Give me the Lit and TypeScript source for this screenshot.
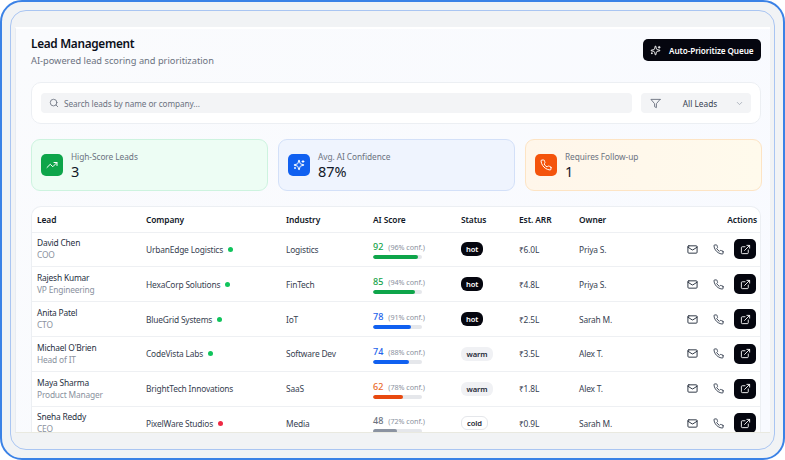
import { LitElement, html, css, svg } from 'lit';
import { customElement } from 'lit/decorators.js';

type Lead = {
  name: string; role: string; company: string; dot: string; industry: string;
  score: number; conf: number; tone: string; status: string; arr: string; owner: string;
};

const leads: Lead[] = [
  { name: 'David Chen', role: 'COO', company: 'UrbanEdge Logistics', dot: 'green', industry: 'Logistics', score: 92, conf: 96, tone: 'green', status: 'hot', arr: '₹6.0L', owner: 'Priya S.' },
  { name: 'Rajesh Kumar', role: 'VP Engineering', company: 'HexaCorp Solutions', dot: 'green', industry: 'FinTech', score: 85, conf: 94, tone: 'green', status: 'hot', arr: '₹4.8L', owner: 'Priya S.' },
  { name: 'Anita Patel', role: 'CTO', company: 'BlueGrid Systems', dot: 'green', industry: 'IoT', score: 78, conf: 91, tone: 'blue', status: 'hot', arr: '₹2.5L', owner: 'Sarah M.' },
  { name: "Michael O'Brien", role: 'Head of IT', company: 'CodeVista Labs', dot: 'green', industry: 'Software Dev', score: 74, conf: 88, tone: 'blue', status: 'warm', arr: '₹3.5L', owner: 'Alex T.' },
  { name: 'Maya Sharma', role: 'Product Manager', company: 'BrightTech Innovations', dot: '', industry: 'SaaS', score: 62, conf: 78, tone: 'orange', status: 'warm', arr: '₹1.8L', owner: 'Alex T.' },
  { name: 'Sneha Reddy', role: 'CEO', company: 'PixelWare Studios', dot: 'red', industry: 'Media', score: 48, conf: 72, tone: 'gray', status: 'cold', arr: '₹0.9L', owner: 'Sarah M.' },
];

const icon = (body: unknown, size = 12) => html`<svg width=${size} height=${size} viewBox="0 0 24 24" fill="none" stroke="currentColor" stroke-width="2" stroke-linecap="round" stroke-linejoin="round">${body}</svg>`;

const phone = svg`<path d="M22 16.92v3a2 2 0 0 1-2.18 2 19.79 19.79 0 0 1-8.63-3.07 19.5 19.5 0 0 1-6-6 19.79 19.79 0 0 1-3.07-8.67A2 2 0 0 1 4.11 2h3a2 2 0 0 1 2 1.72 12.84 12.84 0 0 0 .7 2.81 2 2 0 0 1-.45 2.11L8.09 9.91a16 16 0 0 0 6 6l1.27-1.27a2 2 0 0 1 2.11-.45 12.84 12.84 0 0 0 2.81.7A2 2 0 0 1 22 16.92z"/>`;
const sparkles = svg`<path d="M9.937 15.5A2 2 0 0 0 8.5 14.063l-6.135-1.582a.5.5 0 0 1 0-.962L8.5 9.936A2 2 0 0 0 9.937 8.5l1.582-6.135a.5.5 0 0 1 .963 0L14.063 8.5A2 2 0 0 0 15.5 9.937l6.135 1.581a.5.5 0 0 1 0 .964L15.5 14.063a2 2 0 0 0-1.437 1.437l-1.582 6.135a.5.5 0 0 1-.963 0z"/><path d="M20 3v4"/><path d="M22 5h-4"/><path d="M4 17v2"/><path d="M5 18H3"/>`;
const trending = svg`<polyline points="22 7 13.5 15.5 8.5 10.5 2 17"/><polyline points="16 7 22 7 22 13"/>`;
const mail = svg`<rect x="2" y="4" width="20" height="16" rx="2"/><path d="m22 7-8.97 5.7a1.94 1.94 0 0 1-2.06 0L2 7"/>`;
const external = svg`<path d="M18 13v6a2 2 0 0 1-2 2H5a2 2 0 0 1-2-2V8a2 2 0 0 1 2-2h6"/><polyline points="15 3 21 3 21 9"/><line x1="10" y1="14" x2="21" y2="3"/>`;
const search = svg`<circle cx="11" cy="11" r="8"/><line x1="21" y1="21" x2="16.65" y2="16.65"/>`;
const filter = svg`<polygon points="22 3 2 3 10 12.46 10 19 14 21 14 12.46 22 3"/>`;
const chevron = svg`<path d="m6 9 6 6 6-6"/>`;

@customElement('app-root')
export class AppRoot extends LitElement {
  static styles = css`
    :host {
      display: block;
      width: 785px;
      height: 460px;
      font-family: "Noto Sans", "Liberation Sans", sans-serif;
      color: #111827;
    }
    svg { flex: none; display: block; }
    .frame {
      box-sizing: border-box;
      height: 460px;
      padding: 8px;
      border: 2px solid #3b82e6;
      border-radius: 22px;
      background: #f1f3f5;
    }
    .window {
      box-sizing: border-box;
      height: 440px;
      padding-top: 16px;
      border: 1px solid #a9c5f2;
      border-radius: 16px;
      overflow: hidden;
    }
    .panel {
      box-sizing: border-box;
      height: 406px;
      margin: 0 4px;
      padding: 7px 9px 0 15px;
      border-top: 2px solid #fff;
      border-left: 1px solid #e8ecf2;
      border-bottom: 1px solid #e9e9e0;
      background: linear-gradient(135deg, #fafbfd, #f8faff);
      overflow: hidden;
    }
    .head { display: flex; justify-content: space-between; align-items: flex-start; margin-bottom: 14px; }
    h1 { margin: 0 0 2px; font-size: 11.8px; line-height: 15px; font-weight: 600; letter-spacing: -.3px; color: #0b0f19; }
    .sub { font-size: 9.25px; line-height: 15px; color: #6b7280; }
    .queue {
      display: flex; align-items: center; gap: 8px;
      height: 22px; width: 118px; box-sizing: border-box; margin-top: 3px; padding: 0 7px;
      border-radius: 5px; background: #05060f; color: #fff;
      font-size: 8.2px; font-weight: 600; letter-spacing: -.1px; white-space: nowrap;
    }
    .toolbar {
      display: flex; gap: 9px; height: 42px; box-sizing: border-box; padding: 10px 9px;
      border: 1px solid #eceff3; border-radius: 10px; background: #fff; margin-bottom: 15px;
    }
    .input {
      flex: 1; display: flex; align-items: center; gap: 5px; padding: 0 8px;
      border-radius: 4px; background: #f3f4f6; color: #6b7280; font-size: 8.2px; letter-spacing: -.06px;
    }
    .select {
      display: flex; align-items: center; justify-content: space-between;
      width: 110px; box-sizing: border-box; padding: 0 7px 0 9px;
      border-radius: 4px; background: #f3f4f6; color: #374151; font-size: 8.3px;
    }
    .select .chev { color: #9ca3af; }
    .select .value { margin-left: 4px; }
    .select .funnel { color: #6b7280; }
    .stats { display: grid; grid-template-columns: repeat(3, 1fr); gap: 10px; margin: 0 -1px 15px 0; }
    .stat {
      display: flex; align-items: center; gap: 8px; height: 52px; box-sizing: border-box; padding: 0 9px;
      border: 1px solid; border-radius: 9px;
    }
    .stat.green { background: #edfdf4; border-color: #cdf3df; }
    .stat.blue { background: #eff4fe; border-color: #d3e0f8; }
    .stat.orange { background: linear-gradient(90deg, #fff6ea, #fffaec); border-color: #fde4c4; }
    .badge { width: 22px; height: 22px; border-radius: 5px; display: flex; align-items: center; justify-content: center; color: #fff; }
    .green .badge { background: #0ea54a; }
    .blue .badge { background: #1060f0; }
    .orange .badge { background: #f4540c; }
    .stat-label { font-size: 8.3px; line-height: 12px; letter-spacing: -.05px; color: #6b7280; }
    .stat-value { font-size: 14.5px; line-height: 17px; color: #111827; }
    .table-card { border: 1px solid #eceff3; border-bottom: none; border-radius: 10px 10px 0 0; background: #fff; }
    table { width: 100%; border-collapse: collapse; table-layout: fixed; }
    th {
      height: 24.6px; padding: 0 5px; text-align: left;
      font-size: 8.4px; font-weight: 600; letter-spacing: -.08px; color: #111827;
      border-bottom: 1px solid #eef0f3;
    }
    th.right { text-align: right; padding-right: 3px; }
    td { height: 33.8px; padding: 0 5px; font-size: 8.4px; letter-spacing: -.18px; color: #374151; border-bottom: 1px solid #eef0f3; }
    td:last-child { padding-right: 4px; }
    .name { font-size: 8.4px; line-height: 12px; color: #27303f; }
    .role { font-size: 8.4px; line-height: 12px; color: #8a919e; }
    .company { display: flex; align-items: center; gap: 5px; white-space: nowrap; }
    .dot { width: 5px; height: 5px; border-radius: 50%; }
    .dot.green { background: #10c45c; }
    .dot.red { background: #ee2a44; }
    .score-line { display: flex; align-items: baseline; gap: 5px; line-height: 12px; margin: 2px 0; }
    .score { font-size: 9px; font-weight: 500; letter-spacing: 0; }
    .conf { font-size: 7.2px; letter-spacing: -.04px; color: #8a919e; }
    .score.green { color: #16a34a; }
    .score.blue { color: #2563eb; }
    .score.orange { color: #ea6a2c; }
    .score.gray { color: #6b7280; }
    .track { width: 49px; height: 4px; border-radius: 2px; background: #e5e7eb; overflow: hidden; }
    .fill { height: 100%; border-radius: 2px; }
    .fill.green { background: #0ea54a; }
    .fill.blue { background: #1060f0; }
    .fill.orange { background: #e8490f; }
    .fill.gray { background: #8b93a1; }
    .pill {
      display: inline-block; box-sizing: border-box; height: 14px; line-height: 14px; padding: 0 5px;
      border-radius: 6px; font-size: 7.6px; font-weight: 600; letter-spacing: -.1px;
    }
    .pill.hot { background: #05060f; color: #fff; }
    .pill.warm { background: #f0f1f4; color: #1f2937; padding: 0 5.5px; }
    .pill.cold { background: #fff; color: #1f2937; line-height: 12px; border: 1px solid #e5e7eb; padding: 0 5px; }
    .actions { display: flex; align-items: center; justify-content: flex-end; color: #1f2937; }
    .actions .ghost { width: 26px; display: flex; justify-content: center; }
    .actions .ghost + .ghost { color: #374151; margin-right: 3px; }
    .open {
      width: 22px; height: 20px; border-radius: 5px; background: #05060f; color: #fff;
      display: flex; align-items: center; justify-content: center;
    }
  `;

  render() {
    return html`<div class="frame"><div class="window"><div class="panel">
      <div class="head">
        <div>
          <h1>Lead Management</h1>
          <div class="sub">AI-powered lead scoring and prioritization</div>
        </div>
        <div class="queue">${icon(sparkles, 11)}<span>Auto-Prioritize Queue</span></div>
      </div>

      <div class="toolbar">
        <div class="input">${icon(search, 10)}<span>Search leads by name or company...</span></div>
        <div class="select"><span class="funnel">${icon(filter, 11)}</span><span class="value">All Leads</span><span class="chev">${icon(chevron, 9)}</span></div>
      </div>

      <div class="stats">
        ${this.stat('green', trending, 'High-Score Leads', '3')}
        ${this.stat('blue', sparkles, 'Avg. AI Confidence', '87%')}
        ${this.stat('orange', phone, 'Requires Follow-up', '1')}
      </div>

      <div class="table-card">
        <table>
          <colgroup>
            <col style="width:109px" /><col style="width:140px" /><col style="width:87px" /><col style="width:88px" />
            <col style="width:58px" /><col style="width:60px" /><col />
          </colgroup>
          <thead>
            <tr><th>Lead</th><th>Company</th><th>Industry</th><th>AI Score</th><th>Status</th><th>Est. ARR</th><th>Owner</th><th class="right">Actions</th></tr>
          </thead>
          <tbody>${leads.map((l) => this.row(l))}</tbody>
        </table>
      </div>
    </div></div></div>`;
  }

  stat(tone: string, glyph: unknown, label: string, value: string) {
    return html`<div class="stat ${tone}">
      <div class="badge">${icon(glyph, 12)}</div>
      <div><div class="stat-label">${label}</div><div class="stat-value">${value}</div></div>
    </div>`;
  }

  row(l: Lead) {
    return html`<tr>
      <td><div class="name">${l.name}</div><div class="role">${l.role}</div></td>
      <td><div class="company">${l.company}${l.dot ? html`<span class="dot ${l.dot}"></span>` : ''}</div></td>
      <td>${l.industry}</td>
      <td>
        <div class="score-line"><span class="score ${l.tone}">${l.score}</span><span class="conf">(${l.conf}% conf.)</span></div>
        <div class="track"><div class="fill ${l.tone}" style="width:${l.score}%"></div></div>
      </td>
      <td><span class="pill ${l.status}">${l.status}</span></td>
      <td>${l.arr}</td>
      <td>${l.owner}</td>
      <td>
        <div class="actions">
          <span class="ghost">${icon(mail, 11)}</span>
          <span class="ghost">${icon(phone, 11)}</span>
          <span class="open">${icon(external, 11)}</span>
        </div>
      </td>
    </tr>`;
  }
}
